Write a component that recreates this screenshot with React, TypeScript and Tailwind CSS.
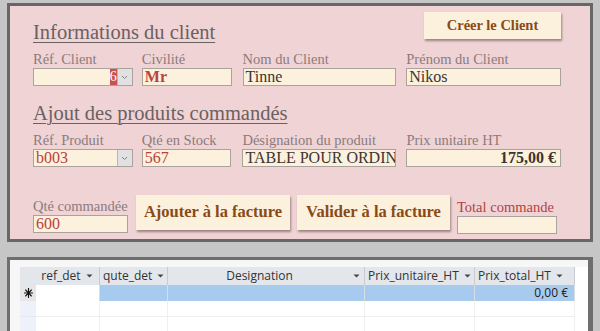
import React from 'react';

const serif = "font-['Liberation_Serif',serif]";
const sans = "font-['Open_Sans','Noto_Sans',sans-serif]";

interface ChampProps {
  label: string;
  value?: string;
  width: string;
  valueClass?: string;
  labelClass?: string;
  combo?: boolean;
  marker?: boolean;
  right?: boolean;
}

const Champ: React.FC<ChampProps> = ({ label, value, width, valueClass = 'text-[#3b3434]', labelClass = 'text-[#8a7c7c]', combo, marker, right }) => (
  <div className={`flex flex-col ${width}`}>
    <div className={`h-[17px] text-[14.5px] leading-[17px] whitespace-nowrap ${labelClass}`}>{label}</div>
    <div className="flex h-[18px] border border-[#aaa39b] bg-[#fbf1dc]">
      <div className={`flex-1 overflow-hidden whitespace-nowrap px-[2px] text-[16px] leading-[16px] ${valueClass} ${right ? 'text-right pr-[4px]' : ''}`}>
        {value}
      </div>
      {marker && <div className="w-[7px] bg-[#c85250] text-[14px] leading-[16px] text-white overflow-hidden">6</div>}
      {combo && (
        <div className="flex w-[15px] items-center justify-center border-l border-[#b7b7b7] bg-[#e1e1e3]">
          <svg width="7" height="5" viewBox="0 0 7 5"><path d="M1 1l2.5 2.5L6 1" fill="none" stroke="#777" strokeWidth="0.9" /></svg>
        </div>
      )}
    </div>
  </div>
);

const Bouton: React.FC<{ text: string; className: string }> = ({ text, className }) => (
  <div className={`flex items-center justify-center bg-[#fbf1dc] font-bold text-[#8a4a17] shadow-[1px_2px_2px_rgba(90,70,60,0.55)] ${className}`}>
    {text}
  </div>
);

const colonnes = [
  { nom: 'ref_det', w: 'w-[64px]' },
  { nom: 'qute_det', w: 'w-[68px]' },
  { nom: 'Designation', w: 'w-[197px]' },
  { nom: 'Prix_unitaire_HT', w: 'w-[110px]' },
  { nom: 'Prix_total_HT', w: 'w-[100px]' },
];

const Fleche = () => (
  <svg width="7" height="4" viewBox="0 0 7 4" className="shrink-0"><path d="M0.5 0.5h6L3.5 3.5z" fill="#444" /></svg>
);

const Etoile = () => (
  <svg width="9" height="10" viewBox="0 0 9 10">
    <g stroke="#111" strokeWidth="1.1" strokeLinecap="round">
      <path d="M4.5 0.5v9" />
      <path d="M0.5 5h8" />
      <path d="M1.6 2l5.8 6" />
      <path d="M7.4 2l-5.8 6" />
    </g>
  </svg>
);

export default function App() {
  return (
    <div className={`h-[331px] w-[600px] overflow-hidden bg-[#c6c6c6] pt-[3px] pl-[7px] ${serif}`}>
      {/* formulaire */}
      <div className="h-[239px] w-[586px] border-[3px] border-[#676767] bg-[#f0d3d5] pl-[23px] pr-[29px]">
        <div className="flex items-start justify-between">
          <h1 className="mt-[13px] text-[20.5px] leading-[26px] text-[#6a6161] underline decoration-1 underline-offset-[3px]">Informations du client</h1>
          <Bouton text="Créer le Client" className="mt-[6px] h-[27px] w-[137px] text-[14.5px]" />
        </div>
        <div className="mt-[6px] flex">
          <Champ label="Réf. Client" width="w-[100px]" combo marker />
          <Champ label="Civilité" value="Mr" width="ml-[9px] w-[90px]" valueClass="text-[#b8433f] font-bold" />
          <Champ label="Nom du Client" value="Tinne" width="ml-[11px] w-[154px]" />
          <Champ label="Prénom du Client" value="Nikos" width="ml-[10px] w-[155px]" />
        </div>
        <h2 className="mt-[14px] text-[20.5px] leading-[26px] text-[#6a6161] underline decoration-1 underline-offset-[3px]">Ajout des produits commandés</h2>
        <div className="mt-[6px] flex">
          <Champ label="Réf. Produit" value="b003" width="w-[100px]" valueClass="text-[#b8433f]" combo />
          <Champ label="Qté en Stock" value="567" width="ml-[9px] w-[90px]" valueClass="text-[#b8433f]" />
          <Champ label="Désignation du produit" value="TABLE POUR ORDINA" width="ml-[11px] w-[154px]" />
          <Champ label="Prix unitaire HT" value="175,00 €" width="ml-[10px] w-[155px]" valueClass="text-[#3b3434] font-bold" right />
        </div>
        <div className="mt-[27px] flex items-start">
          <Champ label="Qté commandée" value="600" width="mt-[4px] w-[95px]" valueClass="text-[#b8433f]" />
          <Bouton text="Ajouter à la facture" className="ml-[8px] mt-[1px] h-[35px] w-[154px] text-[16.5px]" />
          <Bouton text="Valider à la facture" className="ml-[7px] mt-[1px] h-[35px] w-[153px] text-[16.5px]" />
          <Champ label="Total commande" width="ml-[7px] mt-[5px] w-[100px]" labelClass="text-[#b3423f]" />
        </div>
      </div>

      {/* feuille de données */}
      <div className={`mt-[15px] h-[80px] w-[586px] border-[3px] border-r-[5px] border-[#6e6e6e] bg-[#f7f7f7] pl-[10px] pt-[7px] ${sans}`}>
        <div className="flex">
          <div className="w-[16px] flex-col">
            <div className="h-[18px] bg-[#e3e6eb]" />
            <div className="flex h-[16px] items-center justify-center bg-[#e6e6e6]"><Etoile /></div>
            <div className="h-[16px] border-b border-[#e8e8ee] bg-[#eef0fa]" />
            <div className="h-[16px] bg-[#eef0fa]" />
          </div>
          {colonnes.map((c, i) => (
            <div key={c.nom} className={`${c.w} flex flex-col`}>
              <div className={`flex h-[18px] items-center gap-[5px] border-r border-[#c9cbd0] bg-[#e3e6eb] pl-[3px] pr-[4px] text-[12px] text-[#333] ${i === 0 ? 'justify-center' : ''}`}>
                <span className={`whitespace-nowrap ${i === 2 ? 'flex-1 text-center' : ''}`}>{c.nom}</span>
                <Fleche />
              </div>
              <div className={`h-[16px] border-r border-[#d8dde4] text-right text-[12px] leading-[16px] text-[#222] pr-[6px] ${i === 0 ? 'bg-white' : 'bg-[#a7cbee]'}`}>
                {i === 4 ? '0,00 €' : ''}
              </div>
              <div className="h-[16px] border-r border-b border-[#efefef] bg-white" />
              <div className="h-[16px] border-r border-[#efefef] bg-white" />
            </div>
          ))}
          <div className="flex-1 bg-white" />
        </div>
      </div>
    </div>
  );
}
